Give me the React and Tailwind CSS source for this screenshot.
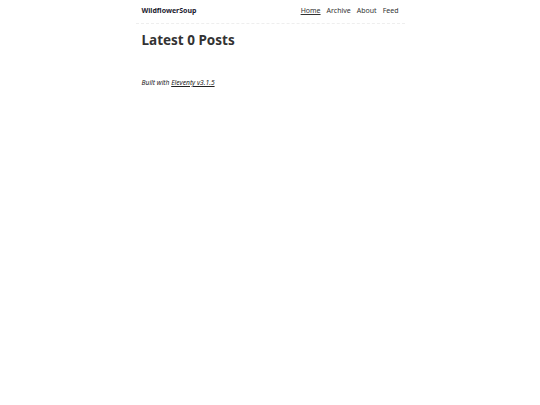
export default function App() {
  return (
    <div
      className="min-h-[405px] bg-white text-[#222]"
      style={{ fontFamily: '"Noto Sans", "Open Sans", sans-serif' }}
    >
      <div className="mx-auto w-[269px]">
        {/* header */}
        <header className="flex h-[24px] items-center justify-between border-b border-dashed border-[#eee] px-[6px] text-[7px]">
          <a href="#" className="font-bold text-[#1a1a2e]">
            WildflowerSoup
          </a>
          <nav className="flex gap-[6px] text-[#333]">
            <a href="#" className="underline">Home</a>
            <a href="#">Archive</a>
            <a href="#">About</a>
            <a href="#">Feed</a>
          </nav>
        </header>

        <main className="px-[6px]">
          <h1 className="mt-[6px] text-[13.5px] leading-[20px] font-bold text-[#333]">
            Latest 0 Posts
          </h1>
        </main>

        <footer className="mt-[28px] px-[6px] text-[6.7px] leading-[10px] italic">
          Built with <a href="#" className="underline">Eleventy v3.1.5</a>
        </footer>
      </div>
    </div>
  );
}
